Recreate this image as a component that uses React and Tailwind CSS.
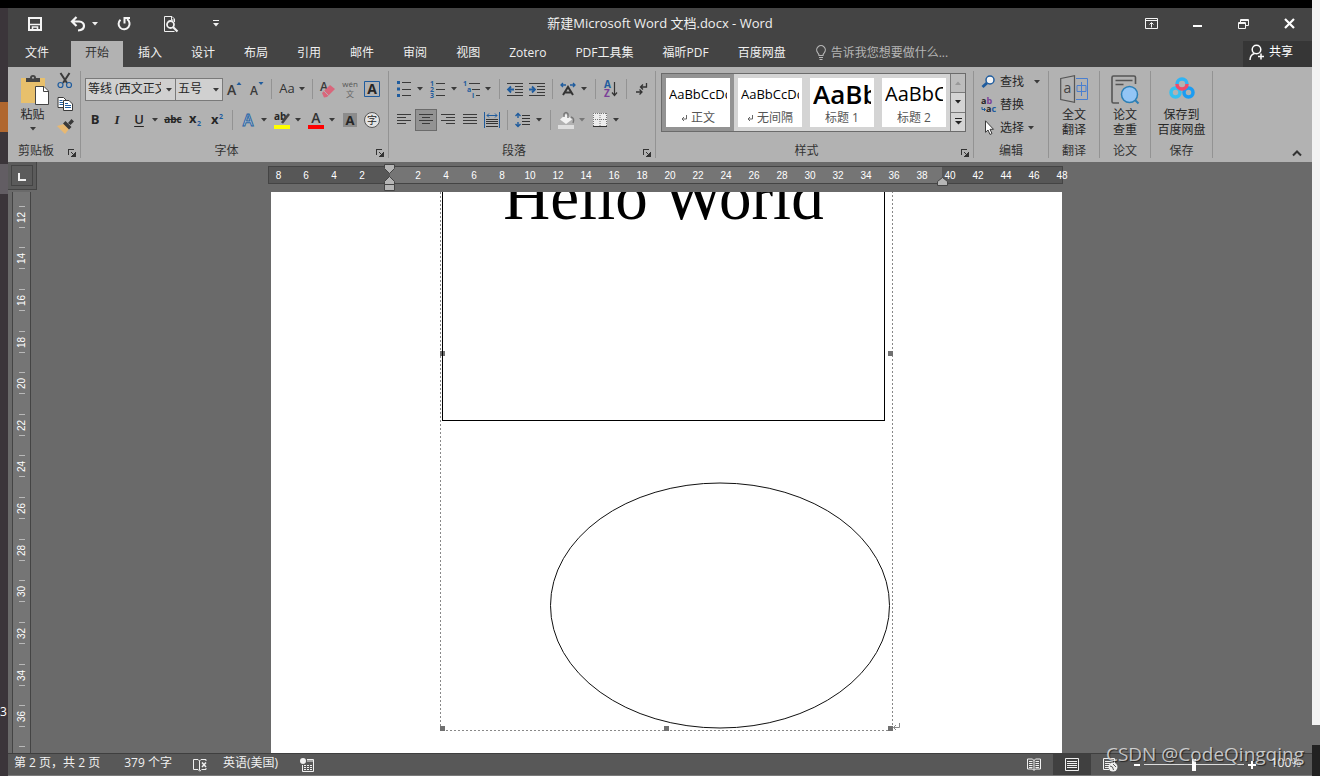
import { useState } from 'react';

const TABS = ['开始', '插入', '设计', '布局', '引用', '邮件', '审阅', '视图', 'Zotero', 'PDF工具集', '福昕PDF', '百度网盘'];

const STYLES = [
  { name: '正文', mark: true, preview: 'text-[13px]' },
  { name: '无间隔', mark: true, preview: 'text-[13px]' },
  { name: '标题 1', preview: 'text-[26px] font-semibold' },
  { name: '标题 2', preview: 'text-[20px]' },
];

// ruler numbers, 0 is left empty because the indent marker sits there
const H_MARKS = [6, 4, 2, '', ...Array.from({ length: 24 }, (_, i) => (i + 1) * 2)];
const V_MARKS = Array.from({ length: 13 }, (_, i) => 12 + i * 2);

const Svg = ({ w = 18, h = 18, children, ...rest }) => (
  <svg width={w} height={h} viewBox={`0 0 ${w} ${h}`} fill="none" className="shrink-0 overflow-visible" aria-hidden="true" {...rest}>
    {children}
  </svg>
);

const Caret = ({ color = '#3a3a3a' }) => (
  <Svg w={6} h={4}><path d="M0 0h6L3 3.5z" fill={color} /></Svg>
);

const Sep = () => <span className="w-px h-5 mx-1 bg-[#939393] shrink-0" />;

function Tool({ label, active, children }) {
  return (
    <button
      aria-label={label}
      className={`w-[22px] h-[22px] shrink-0 flex items-center justify-center ${active ? 'bg-[#939393] border border-[#6b6b6b]' : ''}`}
    >
      {children}
    </button>
  );
}

function SplitTool({ label, caret, children }) {
  return (
    <div className="flex items-center mr-0.5 shrink-0">
      <Tool label={label}>{children}</Tool>
      <button aria-label={`${label}选项`} className="w-2.5 h-[22px] flex items-center justify-center"><Caret color={caret} /></button>
    </div>
  );
}

function Group({ label, launcher, width, children }) {
  return (
    <section className={`${width} shrink-0 flex flex-col border-r border-[#939393] my-1`}>
      <div className="h-[72px]">{children}</div>
      <div className="flex items-center h-[15px] text-[#333] pr-1">
        <span className={`flex-1 text-center whitespace-nowrap ${launcher ? 'pr-1' : 'pl-1'}`}>{label}</span>
        {launcher && (
          <button aria-label={`${label}设置`} className="pt-1">
            <Svg w={8} h={8} shapeRendering="crispEdges">
              <path d="M.5 6V.5H6M3 3l3 3" stroke="#333" />
              <path d="M7.5 3v4.5H3z" fill="#333" />
            </Svg>
          </button>
        )}
      </div>
    </section>
  );
}

// four text lines, x offsets and widths are given per line
const Lines = ({ rows, step = 3 }) => (
  <Svg w={16} h={14} shapeRendering="crispEdges">
    {rows.map(([x, len], i) => <rect key={i} x={x} y={1 + i * step} width={len} height="1" fill="#3a3a3a" />)}
  </Svg>
);

const BigTool = ({ lines, children }) => (
  <button className="w-full h-full pt-1 flex flex-col items-center text-[#262626] leading-[15px] whitespace-nowrap">
    <span className="h-8 flex items-start justify-center">{children}</span>
    {lines.map(l => <span key={l}>{l}</span>)}
  </button>
);

function TitleBar() {
  return (
    <header className="h-[33px] pb-0.5 shrink-0 flex items-center justify-between bg-[#444] text-[#f0f0f0]">
      <div className="flex-1 flex items-center">
        <button aria-label="保存" className="w-[22px] ml-4 flex justify-center">
          <Svg w={14} h={14}>
            <path d="M1 1h12v12H1z" stroke="#f5f5f5" strokeWidth="2" />
            <path d="M2 7.5h10M4.5 13v-3h5v3" stroke="#f5f5f5" strokeWidth="1.6" />
          </Svg>
        </button>
        <button aria-label="撤消" className="w-[22px] ml-[21px] flex justify-center">
          <Svg w={16} h={16}>
            <path d="M6.5 1 2 5.5 6.5 10M2.5 5.5h6.500q5 .5 5 4.500t-6 4.500" stroke="#f5f5f5" strokeWidth="2.200" />
          </Svg>
        </button>
        <button aria-label="撤消列表" className="w-3 flex justify-center"><Caret color="#f0f0f0" /></button>
        <button aria-label="重复" className="w-[22px] ml-3 flex justify-center">
          <Svg w={16} h={16}>
            <path d="M4.500 3.700A5.500 5.500 0 1 0 11 3.200" stroke="#f5f5f5" strokeWidth="2" />
            <path d="M8.500 7.500V2H14" stroke="#f5f5f5" strokeWidth="2" />
          </Svg>
        </button>
        <button aria-label="打印预览" className="w-[22px] ml-[25px] flex justify-center">
          <Svg w={16} h={18}>
            <path d="M11.500 16.500H1.500v-15H9L11.500 4v3M8.500 1.500V5h3" stroke="#f0f0f0" />
            <circle cx="7.500" cy="9.500" r="3.500" stroke="#f0f0f0" strokeWidth="1.800" />
            <path d="m10 12 4.500 4.500" stroke="#f0f0f0" strokeWidth="2.200" />
          </Svg>
        </button>
        <button aria-label="自定义快速访问工具栏" className="w-[22px] ml-[23px] flex justify-center">
          <Svg w={6} h={7}><path d="M0 .5h6" stroke="#f0f0f0" /><path d="M0 3h6L3 6.500z" fill="#f0f0f0" /></Svg>
        </button>
      </div>
      <h1 className="text-[13px] whitespace-nowrap">新建Microsoft Word 文档.docx - Word</h1>
      <div className="flex-1 flex items-center justify-end">
        <button aria-label="功能区显示选项" className="w-[46px] flex justify-center">
          <Svg w={13} h={11}><path d="M.5.5h12v10H.5zM.5 2.500h12M6.500 9.500V5M4.500 6.500l2-2 2 2" stroke="#f5f5f5" /></Svg>
        </button>
        <button aria-label="最小化" className="w-[46px] flex justify-center"><span className="w-[9px] h-0.5 mt-1 bg-white" /></button>
        <button aria-label="还原" className="w-[46px] flex justify-center">
          <Svg w={11} h={10}><path d="M.5 3.500h7v6h-7zM.5 4.500h7M2.500 3V.5h8v6H8M2.500 1.500h8" stroke="#f5f5f5" /></Svg>
        </button>
        <button aria-label="关闭" className="w-[46px] flex justify-center">
          <Svg w={11} h={11}><path d="m1 1 9 9m0-9-9 9" stroke="#fff" strokeWidth="2.200" /></Svg>
        </button>
      </div>
    </header>
  );
}

function TabBar({ tab, setTab }) {
  return (
    <nav className="h-[26px] shrink-0 flex bg-[#444] text-[#f0f0f0] whitespace-nowrap">
      <button className="px-3.5 ml-[3px] mr-2 pb-[3px]">文件</button>
      {TABS.map(t => (
        <button
          key={t}
          onClick={() => setTab(t)}
          className={`px-3.5 mr-px pb-[3px] ${tab === t ? 'bg-[#b2b2b2] text-[#333]' : ''}`}
        >
          {t}
        </button>
      ))}
      <button className="ml-3.5 pb-[3px] flex items-center gap-1 text-[#b5b5b5]">
        <Svg w={12} h={16}>
          <path d="M4 10.500Q4 9 2.800 7.800A4.300 4.300 0 1 1 9.200 7.800Q8 9 8 10.500zM4 12.500h4M4.500 14.500h3" stroke="#b5b5b5" strokeWidth="1.200" />
        </Svg>
        告诉我您想要做什么...
      </button>
      <button className="ml-auto w-[69px] pl-1.5 pb-1 flex items-center gap-1 bg-[#363636] text-white">
        <Svg w={16} h={17}>
          <circle cx="7.500" cy="5.500" r="4.300" stroke="#fff" strokeWidth="1.500" />
          <path d="M1 16q0-5 4.500-6.500M12 9.500v6M9 12.500h6" stroke="#fff" strokeWidth="1.500" />
        </Svg>
        共享
      </button>
    </nav>
  );
}

function Clipboard() {
  return (
    <Group label="剪贴板" launcher width="w-[73px]">
      <div className="flex">
        <button className="w-[49px] pt-1 flex flex-col items-center text-[#262626]">
          <span className="pl-1">
            <Svg w={28} h={30}>
              <path d="M0 3h24v25H0z" fill="#e8c06c" />
              <path d="M5 3h4q0-3 3-3t3 3h4v4H5z" fill="#444" />
              <circle cx="12" cy="2.800" r="1" fill="#b2b2b2" />
              <path d="M14.500 11.500H23l4.500 4.500v13.500h-13z" fill="#fff" stroke="#444" />
              <path d="M22.500 11.500v5h5" stroke="#444" />
            </Svg>
          </span>
          <span className="leading-4 mt-0.5">粘贴</span>
          <span className="mt-1"><Caret /></span>
        </button>
        <div className="flex flex-col pt-0.5 gap-[7px]">
          <button aria-label="剪切">
            <Svg w={16} h={16}>
              <path d="M3.500 0 10 10M12.500 0 6 10" stroke="#3a3a3a" strokeWidth="2" />
              <circle cx="3.500" cy="12" r="2.500" stroke="#1f5c9e" strokeWidth="1.200" />
              <circle cx="12" cy="12" r="2.500" stroke="#1f5c9e" strokeWidth="1.200" />
            </Svg>
          </button>
          <button aria-label="复制">
            <Svg w={16} h={16}>
              <path d="M1 1.500h5.500L9 4v7.500H1z" fill="#fff" stroke="#3a3a3a" />
              <path d="M2.500 4.500h3M2.500 6.500h4M2.500 8.500h4" stroke="#1f5c9e" />
              <path d="M6.500 4.500H12L15.500 8v6.500h-9z" fill="#fff" stroke="#3a3a3a" />
              <path d="M8 7.500h3M8 9.500h6M8 11.500h6" stroke="#1f5c9e" />
            </Svg>
          </button>
          <button aria-label="格式刷">
            <Svg w={17} h={15}>
              <path d="M0 7 7 5l5 5-4 5Z" fill="#e8b871" />
              <path d="M6 4.500 8.500 2l6 6-2.500 2.500zM11 4l3.500-4L17 2.500 13.500 6z" fill="#3a3a3a" />
            </Svg>
          </button>
        </div>
      </div>
    </Group>
  );
}

function FontGroup() {
  return (
    <Group label="字体" launcher width="w-[308px]">
      <div className="flex items-center h-[22px] mt-[7px] pl-1">
        <div className="relative w-[91px] -mr-px shrink-0">
          <select aria-label="字体" className="appearance-none block w-full h-[23px] pl-0.5 pr-3.5 bg-[#d0d0d0] border border-[#7a7a7a] text-[#262626] overflow-hidden">
            <option>等线 (西文正文)</option>
          </select>
          <span className="absolute right-1 top-2.5 pointer-events-none"><Caret /></span>
        </div>
        <div className="relative w-12 shrink-0">
          <select aria-label="字号" className="appearance-none block w-full h-[23px] pl-0.5 pr-3.5 bg-[#d0d0d0] border border-[#7a7a7a] text-[#262626]">
            <option>五号</option>
          </select>
          <span className="absolute right-1 top-2.5 pointer-events-none"><Caret /></span>
        </div>
        <Tool label="增大字号">
          <Svg w={14} h={16}>
            <text x="0" y="14" fontSize="14" fontWeight="600" fill="#3a3a3a">A</text>
            <path d="M9.500 4 12 1l2.500 3z" fill="#1f5c9e" />
          </Svg>
        </Tool>
        <Tool label="减小字号">
          <Svg w={14} h={16}>
            <text x="1" y="14" fontSize="12" fontWeight="600" fill="#3a3a3a">A</text>
            <path d="M9.500 1 12 4l2.500-3z" fill="#1f5c9e" />
          </Svg>
        </Tool>
        <Sep />
        <button aria-label="更改大小写" className="w-8 flex items-center justify-center gap-1 text-[13px] text-[#333]">Aa<Caret /></button>
        <Sep />
        <Tool label="清除所有格式">
          <Svg w={16} h={17}>
            <text x="0" y="10" fontSize="12" fontWeight="600" fill="#3a3a3a">A</text>
            <path d="m2 12 8-8 5 4-8 8-3 .5z" fill="#d9667b" />
            <path d="m4 10 4.500 4.500" stroke="#b2b2b2" />
          </Svg>
        </Tool>
        <Tool label="拼音指南">
          <Svg w={18} h={18}>
            <text x="9" y="7" textAnchor="middle" fontSize="8" fill="#555">wén</text>
            <text x="9" y="17" textAnchor="middle" fontSize="8" fill="#666">文</text>
          </Svg>
        </Tool>
        <Tool label="字符边框">
          <Svg w={16} h={16}>
            <path d="M.5.5h15v15H.5z" stroke="#1f5c9e" />
            <text x="8" y="13" textAnchor="middle" fontSize="14" fontWeight="700" fill="#262626">A</text>
          </Svg>
        </Tool>
      </div>
      <div className="flex items-center h-[22px] mt-[9px] pl-[3px] text-[#262626] text-[13px]">
        <Tool label="加粗"><b>B</b></Tool>
        <Tool label="倾斜"><i className="font-semibold font-['Liberation_Serif',serif]">I</i></Tool>
        <SplitTool label="下划线"><u className="font-semibold underline-offset-2">U</u></SplitTool>
        <Tool label="删除线"><s className="text-[10px] font-bold">abc</s></Tool>
        <Tool label="下标">
          <Svg w={12} h={14}><text x="0" y="10" fontSize="13" fontWeight="700" fill="#262626">x</text><text x="8" y="13" fontSize="7" fontWeight="700" fill="#1f5c9e">2</text></Svg>
        </Tool>
        <Tool label="上标">
          <Svg w={12} h={14}><text x="0" y="11" fontSize="13" fontWeight="700" fill="#262626">x</text><text x="8" y="6" fontSize="7" fontWeight="700" fill="#1f5c9e">2</text></Svg>
        </Tool>
        <Sep />
        <SplitTool label="文本效果">
          <Svg w={16} h={16}><text x="8" y="14" textAnchor="middle" fontSize="16" fontWeight="600" fill="#c4ccd6" stroke="#2a66a5">A</text></Svg>
        </SplitTool>
        <SplitTool label="突出显示">
          <Svg w={16} h={17}>
            <text x="0" y="8" fontSize="10" fontWeight="700" fill="#262626">ab</text>
            <path d="m15 2-7 9" stroke="#444" strokeWidth="2.500" />
            <path d="M0 13h16v4H0z" fill="#ffff00" />
          </Svg>
        </SplitTool>
        <SplitTool label="字体颜色">
          <Svg w={16} h={17}>
            <text x="8" y="11" textAnchor="middle" fontSize="14" fontWeight="600" fill="#333">A</text>
            <path d="M0 13h16v4H0z" fill="#ff0000" />
          </Svg>
        </SplitTool>
        <Tool label="字符底纹"><span className="w-3.5 h-3.5 bg-[#8c8c8c] font-bold leading-[14px] text-center">A</span></Tool>
        <Tool label="带圈字符"><span className="w-4 h-4 rounded-full border border-[#555] bg-[#e4e4e4] text-[10px] leading-[14px] text-center">字</span></Tool>
      </div>
    </Group>
  );
}

function ParagraphGroup() {
  return (
    <Group label="段落" launcher width="w-[267px]">
      <div className="flex items-center h-[22px] mt-[7px] pl-1">
        <SplitTool label="项目符号">
          <Svg w={14} h={16}>
            <path d="M0 1.500h3M0 8h3M0 14.500h3" stroke="#1f5c9e" strokeWidth="3" />
            <path d="M5 1.500h9M5 8.500h9M5 14.500h9" stroke="#3a3a3a" />
          </Svg>
        </SplitTool>
        <SplitTool label="编号">
          <Svg w={16} h={18}>
            {[1, 2, 3].map(n => <text key={n} x="0" y={n * 6} fontSize="7" fontWeight="700" fill="#1f5c9e">{n}</text>)}
            <path d="M6 3.500h9M6 9.500h9M6 15.500h9" stroke="#3a3a3a" />
          </Svg>
        </SplitTool>
        <SplitTool label="多级列表">
          <Svg w={18} h={18}>
            <text x="0" y="6" fontSize="7" fontWeight="700" fill="#1f5c9e">1</text>
            <text x="4" y="12" fontSize="7" fontWeight="700" fill="#1f5c9e">a</text>
            <text x="9" y="18" fontSize="7" fontWeight="700" fill="#1f5c9e">i</text>
            <path d="M6 3.500h11M9 9.500h8M13 15.500h4" stroke="#3a3a3a" />
          </Svg>
        </SplitTool>
        <Sep />
        <Tool label="减少缩进量">
          <Svg w={16} h={13}>
            <path d="M0 .5h16M8 3.500h8M8 6.500h8M8 9.500h8M0 12.500h16" stroke="#3a3a3a" />
            <path d="M7 6.500H1.500M4 3.500l-3 3 3 3" stroke="#1f5c9e" strokeWidth="1.800" />
          </Svg>
        </Tool>
        <Tool label="增加缩进量">
          <Svg w={16} h={13}>
            <path d="M0 .5h16M8 3.500h8M8 6.500h8M8 9.500h8M0 12.500h16" stroke="#3a3a3a" />
            <path d="M0 6.500h5.500M3 3.500l3 3-3 3" stroke="#1f5c9e" strokeWidth="1.800" />
          </Svg>
        </Tool>
        <Sep />
        <SplitTool label="中文版式">
          <Svg w={16} h={14}>
            <path d="m3 13 5-8 5 8M5 10.500h6" stroke="#333" strokeWidth="2" />
            <path d="M6 3H1M3 1 1 3l2 2M10 3h5M13 1l2 2-2 2" stroke="#1f5c9e" strokeWidth="1.300" />
          </Svg>
        </SplitTool>
        <Sep />
        <Tool label="排序">
          <Svg w={14} h={18}>
            <text x="0" y="8" fontSize="10" fontWeight="700" fill="#1f5c9e">A</text>
            <text x="0" y="17" fontSize="10" fontWeight="700" fill="#7b3f98">Z</text>
            <path d="M10.500 2v13M8 12.500l2.500 3 2.500-3" stroke="#333" strokeWidth="1.200" />
          </Svg>
        </Tool>
        <Sep />
        <Tool label="显示编辑标记">
          <Svg w={12} h={14}>
            <path d="M10.500 1v4H5M7 2.500 4.500 5 7 7.500M0 10h6M3.500 7.500 6 10l-2.500 2.500" stroke="#333" strokeWidth="1.300" />
          </Svg>
        </Tool>
      </div>
      <div className="flex items-center h-[22px] mt-[9px] pl-1">
        <Tool label="左对齐"><Lines rows={[[1, 14], [1, 9], [1, 14], [1, 9]]} /></Tool>
        <Tool label="居中" active><Lines rows={[[1, 14], [4, 8], [1, 14], [4, 8]]} /></Tool>
        <Tool label="右对齐"><Lines rows={[[1, 14], [6, 9], [1, 14], [6, 9]]} /></Tool>
        <Tool label="两端对齐"><Lines rows={[[1, 14], [1, 14], [1, 14], [1, 14]]} /></Tool>
        <Tool label="分散对齐">
          <Svg w={16} h={16}>
            <path d="M.5 0v16M15.500 0v16M3 3.500h10M5 1.500l-2 2 2 2M11 1.500l2 2-2 2" stroke="#1f5c9e" />
            <path d="M2 7.500h12M2 9.500h12M2 11.500h12M2 14.500h12" stroke="#333" />
          </Svg>
        </Tool>
        <Sep />
        <SplitTool label="行和段落间距">
          <Svg w={16} h={16}>
            <path d="M3 1v5M3 10v5M.5 4 3 1.500 5.500 4M.5 12 3 14.500 5.500 12" stroke="#1f5c9e" strokeWidth="1.400" />
            <path d="M7 3.500h8M7 6.500h8M7 9.500h8M7 12.500h8" stroke="#333" />
          </Svg>
        </SplitTool>
        <Sep />
        <SplitTool label="底纹" caret="#777">
          <Svg w={17} h={17}>
            <path d="M2 7.500 8 2l6 5.500L8 12z" fill="#f2f2f2" />
            <path d="M6 5V2q2-3 4 0v4M13 5q4 1 2 6" stroke="#777" strokeWidth="1.400" />
            <path d="M0 13h16v4H0z" fill="#dedede" />
          </Svg>
        </SplitTool>
        <SplitTool label="边框">
          <Svg w={14} h={14}>
            <path d="M0 0h14v14H0z" fill="#ededed" />
            <path d="M.5 0v13M7 0v13M13.500 0v13M0 .5h14M0 6.500h14" stroke="#777" strokeDasharray="1 1" />
            <path d="M0 13.500h14" stroke="#333" />
          </Svg>
        </SplitTool>
      </div>
    </Group>
  );
}

function StylesGroup() {
  const [current, setCurrent] = useState('正文');
  return (
    <Group label="样式" launcher width="w-[318px]">
      <div className="flex mt-0.5 ml-[5px] mr-[7px] h-[59px] border border-[#6b6b6b] bg-[#d4d4d4]">
        {STYLES.map(s => (
          <button
            key={s.name}
            onClick={() => setCurrent(s.name)}
            className={`w-[72px] shrink-0 border-4 ${current === s.name ? 'border-[#939393]' : 'border-transparent'}`}
          >
            <span className="flex flex-col h-full bg-white bg-clip-padding px-[3px] overflow-hidden">
              <span className={`${s.preview} h-8 leading-8 overflow-hidden whitespace-nowrap text-left text-black`}>
                AaBbCcDd
              </span>
              <span className="flex items-center justify-center gap-1 leading-[16px] text-[#555]">
                {s.mark && <Svg w={6} h={6}><path d="M5.500 0v4H1M3 2 1 4l2 2" stroke="#666" /></Svg>}
                {s.name}
              </span>
            </span>
          </button>
        ))}
        <div className="flex-1 flex flex-col border-l border-[#7a7a7a] divide-y divide-[#7a7a7a]">
          <button aria-label="上一行" className="flex-1 flex items-center justify-center bg-[#bdbdbd]">
            <Svg w={6} h={4}><path d="M0 4h6L3 .5z" fill="#999" /></Svg>
          </button>
          <button aria-label="下一行" className="flex-1 flex items-center justify-center"><Caret color="#222" /></button>
          <button aria-label="其他样式" className="flex-1 flex items-center justify-center">
            <Svg w={7} h={7}><path d="M0 .5h7" stroke="#222" /><path d="M0 3h7L3.500 6.500z" fill="#222" /></Svg>
          </button>
        </div>
      </div>
    </Group>
  );
}

function Ribbon() {
  return (
    <div className="h-[95px] shrink-0 flex bg-[#b2b2b2]">
      <Clipboard />
      <FontGroup />
      <ParagraphGroup />
      <StylesGroup />
      <Group label="编辑" width="w-[75px]">
        <div className="flex flex-col pl-[7px] text-[#262626]">
          <button className="h-[23px] pb-0.5 flex items-center gap-1">
            <Svg w={15} h={14}>
              <path d="m1.500 12 5-4.500" stroke="#1f5c9e" strokeWidth="3" />
              <circle cx="9" cy="5" r="4" fill="#f4f4f4" stroke="#1f5c9e" strokeWidth="1.500" />
            </Svg>
            查找<span className="ml-1.5"><Caret /></span>
          </button>
          <button className="h-[23px] pb-0.5 flex items-center gap-1">
            <Svg w={15} h={16}>
              <text x="0" y="7" fontSize="9" fontWeight="700" fill="#262626">a<tspan fill="#7b3f98">b</tspan></text>
              <text x="5" y="15" fontSize="9" fontWeight="700" fill="#262626">a<tspan fill="#1f5c9e">c</tspan></text>
              <path d="M1 10v2.500h3M3 11l1.500 1.500L3 14" stroke="#1f5c9e" />
            </Svg>
            替换
          </button>
          <button className="h-[23px] pb-0.5 flex items-center gap-1">
            <Svg w={15} h={15}>
              <path d="M4.500.8v11.500L7 10l2 4.500 2-1-2-4.200h3.500z" fill="#fff" stroke="#3a3a3a" />
            </Svg>
            选择<Caret />
          </button>
        </div>
      </Group>
      <Group label="翻译" width="w-[51px]">
        <BigTool lines={['全文', '翻译']}>
          <Svg w={28} h={28}>
            <path d="M.7 3.500 14.500.7v26.600L.7 24.500z" stroke="#555" strokeWidth="1.200" />
            <text x="7.500" y="18" textAnchor="middle" fontSize="14" fill="#444">a</text>
            <path d="M16 3.500h11.500v21H16" stroke="#4a7fd0" />
            <path d="M17 10.500h9v6h-9zM21.500 7v14" stroke="#4a7fd0" />
          </Svg>
        </BigTool>
      </Group>
      <Group label="论文" width="w-[51px]">
        <BigTool lines={['论文', '查重']}>
          <Svg w={28} h={30}>
            <path d="M24.500 9V2.500q0-1.500-1.500-1.500H2.500Q1 1 1 2.500v24Q1 28 2.500 28H8" stroke="#555" strokeWidth="1.600" />
            <path d="M4.500 5.500h17M4.500 9.500h8" stroke="#555" strokeWidth="1.600" />
            <circle cx="18.500" cy="19.500" r="8" fill="#93c5f5" stroke="#2c7fb5" strokeWidth="1.500" />
            <path d="m24 25 3.500 3.500" stroke="#2c7fb5" strokeWidth="2" />
          </Svg>
        </BigTool>
      </Group>
      <Group label="保存" width="w-[62px]">
        <BigTool lines={['保存到', '百度网盘']}>
          <Svg w={26} h={26}>
            <circle cx="6.500" cy="17.500" r="4.500" stroke="#35c0f0" strokeWidth="3.500" />
            <circle cx="19.500" cy="17.500" r="4.500" stroke="#1b9cf2" strokeWidth="3.500" />
            <path d="M8 9a5 5 0 0 1 10 0" stroke="#2fb4f5" strokeWidth="3.500" />
            <path d="M8 9a5 5 0 0 0 10 0" stroke="#f04a6a" strokeWidth="3.500" />
          </Svg>
        </BigTool>
      </Group>
      <button aria-label="折叠功能区" className="ml-auto self-end mr-2.5 mb-1.5">
        <Svg w={10} h={6}><path d="m1 5.500 4-4 4 4" stroke="#333" strokeWidth="2" /></Svg>
      </button>
    </div>
  );
}

const IndentMarker = () => (
  <Svg w={11} h={9}><path d="M.5 8.500v-4l5-4 5 4v4z" fill="#b5b5b5" stroke="#444" /></Svg>
);

function HorizontalRuler() {
  return (
    <div className="relative flex items-center w-[795px] h-[18px] shrink-0 mt-1 -ml-0.5 pt-0.5 border border-[#444] text-[10px] text-white font-['Liberation_Sans',sans-serif] bg-[linear-gradient(to_right,#575757_121px,#757575_121px,#757575_673px,#575757_673px)]">
      <span className="w-[23px] pr-1 shrink-0 text-center">8</span>
      {H_MARKS.map((n, i) => <span key={i} className="w-7 shrink-0 text-center">{n}</span>)}
      <div className="absolute left-[115px] -top-[3px]">
        <Svg w={11} h={28}>
          <path d="M.5.500h10v4l-5 5-5-5z" fill="#b5b5b5" stroke="#444" />
          <path d="M.5 20.500v-3l5-5 5 5v3zM.5 20.500h10v6H.5z" fill="#b5b5b5" stroke="#444" />
        </Svg>
      </div>
      <div className="absolute left-[668px] top-2.5"><IndentMarker /></div>
    </div>
  );
}

const Tick = () => <span className="w-1.5 h-px shrink-0 bg-[#b8b8b8]" />;

function VerticalRuler() {
  return (
    <div className="flex-1 mt-0.5 ml-1 w-[19px] flex flex-col items-center pt-1 border-x border-[#444] bg-[#757575] text-[10px] text-white font-['Liberation_Sans',sans-serif]">
      {V_MARKS.map(n => (
        <div key={n} className="flex-1 flex flex-col items-center justify-center">
          <Tick />
          <span className="h-5 leading-[12px] text-center rotate-180 [writing-mode:vertical-rl]">{n}</span>
          <Tick />
        </div>
      ))}
      <div className="h-4 flex items-center pt-1"><Tick /></div>
    </div>
  );
}

function Page() {
  return (
    <div className="relative flex-1 w-[791px] bg-white overflow-hidden">
      {/* drawing canvas with its two shapes */}
      <div className="absolute left-[169px] top-0">
        <div className="absolute left-0.5 top-0 w-[443px] h-[229px] border border-t-0 border-black overflow-hidden">
          <p className="-mt-[27px] text-center text-[65px] leading-[64px] whitespace-nowrap text-black font-['Liberation_Serif',serif]">
            Hello World
          </p>
        </div>
        <Svg w={462} h={540}>
          <path d="M.5 0v538.500h452V0" stroke="#888" strokeDasharray="2 2" />
          <ellipse cx="280" cy="413.500" rx="169.500" ry="122.500" stroke="#111" />
          <path d="M0 159h5v5H0zM448 159h5v5h-5zM0 534h5v5H0zM224 534h5v5h-5zM448 534h5v5h-5z" fill="#707070" />
          <path d="M459.500 531v4.500h-6M456 533l-2.500 2.500L456 538" stroke="#888" />
        </Svg>
      </div>
    </div>
  );
}

function Workspace() {
  return (
    <main className="flex-1 min-h-0 flex bg-[#6a6a6a]">
      <div className="w-[29px] shrink-0 flex flex-col">
        <button aria-label="制表符" className="h-7 p-[3px] bg-[#5b5b5b] border-r border-b border-[#444]">
          <span className="h-full flex items-end justify-center pb-1 border border-[#444]">
            <Svg w={8} h={8}><path d="M1 0v7h7" stroke="#f0f0f0" strokeWidth="2" /></Svg>
          </span>
        </button>
        <VerticalRuler />
      </div>
      <div className="flex-1 min-w-0 flex flex-col items-center gap-2 pr-4">
        <HorizontalRuler />
        <Page />
      </div>
    </main>
  );
}

function StatusBar() {
  const [zoom, setZoom] = useState(100);
  return (
    <footer className="h-[23px] shrink-0 flex items-center bg-[#585858] border-t border-t-[#3f3f3f] border-b border-b-[#7a7a7a] text-[#f0f0f0] whitespace-nowrap pl-1.5">
      <span className="pb-1">第 2 页，共 2 页</span>
      <span className="ml-6 pb-1">379 个字</span>
      <button aria-label="校对" className="ml-5">
        <Svg w={16} h={14}>
          <path d="M9 12.500 7.500 13 6 11.500H1.500V1.500H6L7.500 3v9M7.500 3 9 1.500h5V3M14 10v1.500H9.500" stroke="#f0f0f0" />
          <path d="m10 4.500 4 4.500m0-4.500L10 9" stroke="#f0f0f0" strokeWidth="1.500" />
        </Svg>
      </button>
      <button className="ml-[15px] pb-1">英语(美国)</button>
      <button aria-label="宏录制" className="ml-[22px]">
        <Svg w={14} h={14}>
          <circle cx="3" cy="3" r="3" fill="#f0f0f0" />
          <path d="M7 1.500h6.500v12h-11V7M7 3h6" stroke="#f0f0f0" />
          <path d="M4 7.500h8M4 9.500h8M4 11.500h8" stroke="#f0f0f0" strokeDasharray="2 1" />
        </Svg>
      </button>
      <button aria-label="阅读视图" className="ml-auto w-[38px] flex justify-center">
        <Svg w={14} h={13}>
          <path d="M.5 1h5L7 2.500 8.500 1h5v10h-5L7 12.500 5.500 11h-5zM7 2v10M2 3.500h3.500M2 5.500h3.500M2 7.500h3.500M2 9.500h3.500M8.500 3.500H12M8.500 5.500H12M8.500 7.500H12M8.500 9.500H12" stroke="#f0f0f0" />
        </Svg>
      </button>
      <button aria-label="页面视图" className="w-[38px] h-full flex items-center justify-center bg-[#404040]">
        <Svg w={14} h={13}><path d="M.5.5h13v12H.5zM2 3.500h10M2 5.500h10M2 7.500h10M2 9.500h10" stroke="#f0f0f0" /></Svg>
      </button>
      <button aria-label="Web 版式视图" className="w-[38px] flex justify-center">
        <Svg w={15} h={14}>
          <path d="M6 11.500H.5V.5h11V5M2 3.500h8M2 5.500h5M2 7.500h4M2 9.500h4" stroke="#f0f0f0" />
          <circle cx="10" cy="9" r="4.500" fill="#f0f0f0" />
          <path d="m7 8 2.500 1 1 3M10 6l3 3" stroke="#585858" />
        </Svg>
      </button>
      <button aria-label="缩小" className="w-[15px] flex justify-center"><span className="w-1.5 h-0.5 bg-white" /></button>
      <input
        type="range"
        aria-label="显示比例"
        min="10"
        max="190"
        value={zoom}
        onChange={e => setZoom(Number(e.target.value))}
        className="w-[100px] h-3.5 appearance-none bg-[linear-gradient(#ddd,#ddd)] bg-[length:100%_1px] bg-center bg-no-repeat [&::-webkit-slider-thumb]:appearance-none [&::-webkit-slider-thumb]:w-1 [&::-webkit-slider-thumb]:h-3 [&::-webkit-slider-thumb]:bg-white"
      />
      <button aria-label="放大" className="w-4 flex justify-center"><Svg w={8} h={8}><path d="M4 0v8M0 4h8" stroke="#fff" strokeWidth="2" /></Svg></button>
      <span className="w-[52px] pb-1 text-center">{zoom}%</span>
    </footer>
  );
}

export default function App() {
  const [tab, setTab] = useState('开始');

  return (
    <div className="relative h-screen flex overflow-hidden bg-black text-xs font-['Open_Sans','Noto_Sans_CJK_SC',sans-serif]">
      {/* desktop showing on the left of the window */}
      <div className="w-2 shrink-0 flex flex-col mt-2 bg-[#3b353a] overflow-hidden">
        <span className="h-[94px] shrink-0" />
        <span className="h-[30px] shrink-0 bg-[#b0672f]" />
        <span className="h-8 shrink-0" />
        <span className="h-[30px] shrink-0 bg-[#625d63]" />
        <span className="mt-auto pb-14 text-white leading-4">3</span>
      </div>

      <div className="flex-1 min-w-0 flex flex-col pt-2">
        <TitleBar />
        <TabBar tab={tab} setTab={setTab} />
        <Ribbon />
        <Workspace />
        <StatusBar />
      </div>

      <div className="w-2 shrink-0 flex flex-col bg-[#f3f3f3]">
        <span className="mt-auto h-5 bg-[#6a6a6a]" />
        <span className="h-[31px] bg-[#222]" />
      </div>

      <span className="absolute right-4 bottom-2 text-[19px] leading-7 text-white/70 pointer-events-none [text-shadow:1px_1px_1px_rgba(0,0,0,0.6)]">
        CSDN @CodeQingqing
      </span>
    </div>
  );
}
